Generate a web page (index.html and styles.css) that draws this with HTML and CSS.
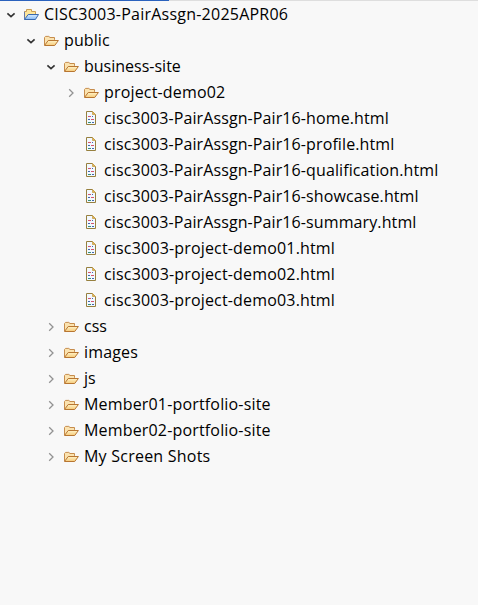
FILE: index.html
```
<!DOCTYPE html>
<html lang="en">
<head>
<meta charset="utf-8">
<title>Project Explorer</title>
<link rel="stylesheet" href="styles.css">
</head>
<body>
<svg class="defs" aria-hidden="true">
  <defs>
    <linearGradient id="tan" x1="0" y1="0" x2="0" y2="1"><stop offset="0" stop-color="#fff3c8"/><stop offset="1" stop-color="#f5ca7a"/></linearGradient>
    <linearGradient id="sky" x1="0" y1="0" x2="0" y2="1"><stop offset="0" stop-color="#d9edff"/><stop offset="1" stop-color="#84b8f5"/></linearGradient>
    <symbol id="down" viewBox="0 0 16 16"><path d="M4.4 7.3 8 10.7l3.6-3.4" fill="none" stroke="#333" stroke-width="1.6"/></symbol>
    <symbol id="right" viewBox="0 0 16 16"><path d="M6.2 5.3 10 9l-3.8 3.7" fill="none" stroke="#929292" stroke-width="1.3"/></symbol>
    <symbol id="folder" viewBox="0 0 16 16">
      <path d="M1.5 13V5.5L2.5 4.4h3.3l1.2 1.1h4.5v2.3" fill="#fbe3b0" stroke="#c68c4c"/>
      <path d="M1.5 13.5 5.2 8.5h10.2l-3.7 5z" fill="url(#tan)" stroke="#b87632" stroke-linejoin="round"/>
    </symbol>
    <symbol id="project" viewBox="0 0 16 16">
      <path d="M1.5 12.5V5.5h2v-2h5v2h4V8" fill="#ffe69a" stroke="#c89d54"/>
      <path d="M1.5 5.8v7.7" fill="none" stroke="#657ba9"/>
      <path d="M1.5 13.5 5.2 8.5h10.3l-3.1 5z" fill="url(#sky)" stroke="#3969ae" stroke-linejoin="round"/>
    </symbol>
    <symbol id="file" viewBox="0 0 16 16">
      <path d="M3.5 1.5h6l3 3v10h-9z" fill="#f2f8ff" stroke="#97803f"/>
      <path d="M9.5 1.5v3h3z" fill="#e3b850" stroke="#c6a050" stroke-width=".8"/>
      <path d="M5 6.5h3M8 9.5h3" stroke="#d4546f"/>
      <path d="M9 6.5h1M5 9.5h2" stroke="#4267b0"/>
      <path d="M5 12.5h3" stroke="#37907a"/><path d="M9 12.5h2" stroke="#4267b0"/>
    </symbol>
  </defs>
</svg>
<div class="topline"></div>
<ul class="tree">
  <li class="row l0"><svg class="arrow"><use href="#down"/></svg><svg class="icon"><use href="#project"/></svg><span class="label root">CISC3003-PairAssgn-2025APR06</span></li>
  <li class="row l1"><svg class="arrow"><use href="#down"/></svg><svg class="icon"><use href="#folder"/></svg><span class="label">public</span></li>
  <li class="row l2"><svg class="arrow"><use href="#down"/></svg><svg class="icon"><use href="#folder"/></svg><span class="label short">business-site</span></li>
  <li class="row l3"><svg class="arrow"><use href="#right"/></svg><svg class="icon"><use href="#folder"/></svg><span class="label numbered">project-demo02</span></li>
  <li class="row l3"><svg class="arrow"></svg><svg class="icon"><use href="#file"/></svg><span class="label">cisc3003-PairAssgn-Pair16-home.html</span></li>
  <li class="row l3"><svg class="arrow"></svg><svg class="icon"><use href="#file"/></svg><span class="label">cisc3003-PairAssgn-Pair16-profile.html</span></li>
  <li class="row l3"><svg class="arrow"></svg><svg class="icon"><use href="#file"/></svg><span class="label">cisc3003-PairAssgn-Pair16-qualification.html</span></li>
  <li class="row l3"><svg class="arrow"></svg><svg class="icon"><use href="#file"/></svg><span class="label">cisc3003-PairAssgn-Pair16-showcase.html</span></li>
  <li class="row l3"><svg class="arrow"></svg><svg class="icon"><use href="#file"/></svg><span class="label">cisc3003-PairAssgn-Pair16-summary.html</span></li>
  <li class="row l3"><svg class="arrow"></svg><svg class="icon"><use href="#file"/></svg><span class="label numbered">cisc3003-project-demo01.html</span></li>
  <li class="row l3"><svg class="arrow"></svg><svg class="icon"><use href="#file"/></svg><span class="label numbered">cisc3003-project-demo02.html</span></li>
  <li class="row l3"><svg class="arrow"></svg><svg class="icon"><use href="#file"/></svg><span class="label numbered">cisc3003-project-demo03.html</span></li>
  <li class="row l2"><svg class="arrow"><use href="#right"/></svg><svg class="icon"><use href="#folder"/></svg><span class="label short">css</span></li>
  <li class="row l2"><svg class="arrow"><use href="#right"/></svg><svg class="icon"><use href="#folder"/></svg><span class="label numbered">images</span></li>
  <li class="row l2"><svg class="arrow"><use href="#right"/></svg><svg class="icon"><use href="#folder"/></svg><span class="label short">js</span></li>
  <li class="row l2"><svg class="arrow"><use href="#right"/></svg><svg class="icon"><use href="#folder"/></svg><span class="label numbered">Member01-portfolio-site</span></li>
  <li class="row l2"><svg class="arrow"><use href="#right"/></svg><svg class="icon"><use href="#folder"/></svg><span class="label numbered">Member02-portfolio-site</span></li>
  <li class="row l2"><svg class="arrow"><use href="#right"/></svg><svg class="icon"><use href="#folder"/></svg><span class="label root">My Screen Shots</span></li>
</ul>
</body>
</html>
```
FILE: styles.css
```
body {
  margin: 0;
  min-height: 605px;
  overflow: hidden;
  background: #f8f8f8;
  color: #000;
  font: 16px/26px "Open Sans", "Noto Sans", sans-serif;
}
.defs { display: block; width: 0; height: 0; }
.topline {
  height: 1px;
  background: linear-gradient(to right, #2b62bd 169px, #dedede 169px);
}
.tree { margin: 0; padding: 0; list-style: none; }
.row { display: flex; align-items: center; height: 26px; white-space: nowrap; }
.l0 { padding-left: 3px; }
.l1 { padding-left: 23px; }
.l2 { padding-left: 43px; }
.l3 { padding-left: 63px; }
.arrow, .icon { flex: none; width: 16px; height: 16px; }
.icon { margin: 0 5px 0 4px; }
.label { letter-spacing: 0.105px; }
.label.root { letter-spacing: 0.23px; }
.label.numbered { letter-spacing: 0.17px; }
.label.short { letter-spacing: 0; }
```
